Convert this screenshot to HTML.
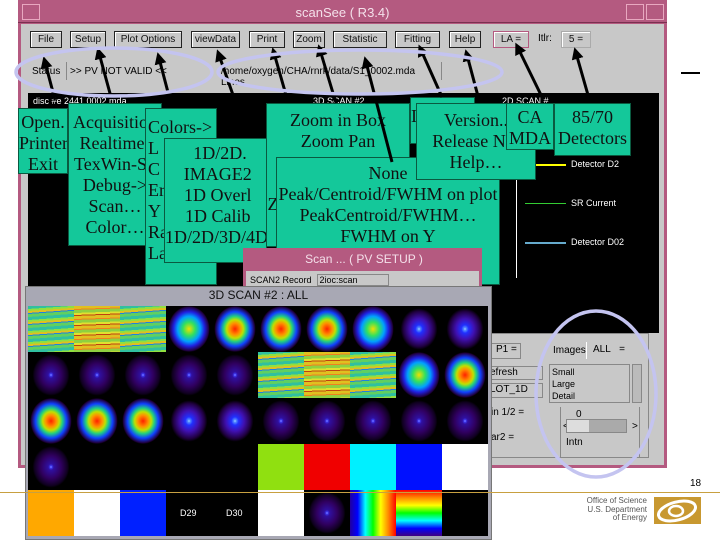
<!DOCTYPE html>
<html><head><meta charset="utf-8"><style>
*{margin:0;padding:0;box-sizing:border-box}
body{width:720px;height:540px;overflow:hidden;background:#fff;position:relative;font-family:"Liberation Sans",sans-serif}
.a{position:absolute}
.btn{position:absolute;top:31px;height:17px;border:1px solid #222;background:#c8c8c8;font-size:10px;color:#111;text-align:center;line-height:15px;box-shadow:inset 1px 1px 0 #fff}
.g{position:absolute;background:#14c89a;border:1px solid #0a5a40;font-family:"Liberation Serif",serif;font-size:18px;line-height:21px;color:#111;text-align:center;white-space:nowrap;overflow:hidden;padding-top:8px}
.w{color:#fff;font-size:9px;position:absolute}
.cell{position:absolute;width:46px;height:46px;background:#000}
.blob{background:radial-gradient(ellipse 45% 50% at 50% 50%,#ff2000 0,#ff9000 25%,#c0e000 40%,#20d080 55%,#1040ff 75%,#200040 95%,#000 100%)}
.blob2{background:radial-gradient(ellipse 45% 50% at 50% 50%,#f0e000 0,#30e060 30%,#00a0ff 55%,#2020e0 75%,#200040 95%,#000 100%)}
.blue{background:radial-gradient(ellipse 40% 45% at 50% 50%,#fff 0,#60a0ff 4%,#2030ff 20%,#4010b0 50%,#200040 85%,#000 100%)}
.pur{background:radial-gradient(ellipse 40% 45% at 50% 50%,#fff 0,#4040ff 4%,#3010a0 15%,#300060 55%,#100020 90%,#000 100%)}
.str{background:repeating-linear-gradient(176deg,#30c0a0 0 3px,#90e040 3px 5px,#e0c020 5px 7px,#2080e0 7px 8px,#60d060 8px 11px)}
.str2{background:repeating-linear-gradient(178deg,#e0c020 0 3px,#f08020 3px 4px,#90d040 4px 7px,#e0e030 7px 9px,#c04010 9px 10px)}
</style></head><body>
<div class="a" style="left:18px;top:0;width:649px;height:468px;background:#b45a80"></div>
<div class="a" style="left:21px;top:24px;width:643px;height:441px;background:#c8c8c8"></div>
<div class="a" style="left:18px;top:2px;width:649px;height:21px;background:#b45a80;border-bottom:1px solid #7a3050"></div>
<div class="a" style="left:22px;top:4px;width:18px;height:16px;border:1px solid #e8a8c0"></div>
<div class="a" style="left:626px;top:4px;width:18px;height:16px;border:1px solid #e8a8c0"></div>
<div class="a" style="left:646px;top:4px;width:18px;height:16px;border:1px solid #e8a8c0"></div>
<div class="a" style="left:0;top:5px;width:685px;text-align:center;color:#f4e0ea;font-size:13px">scanSee ( R3.4)</div>
<div class="btn" style="left:30px;width:32px">File</div>
<div class="btn" style="left:70px;width:36px">Setup</div>
<div class="btn" style="left:114px;width:68px">Plot Options</div>
<div class="btn" style="left:191px;width:49px">viewData</div>
<div class="btn" style="left:249px;width:36px">Print</div>
<div class="btn" style="left:293px;width:32px">Zoom</div>
<div class="btn" style="left:333px;width:54px">Statistic</div>
<div class="btn" style="left:395px;width:45px">Fitting</div>
<div class="btn" style="left:449px;width:32px">Help</div>
<div class="btn" style="left:493px;width:36px;border-color:#b45a80">LA =</div>
<div class="a" style="left:538px;top:33px;font-size:10px">Itlr:</div>
<div class="btn" style="left:561px;width:30px;border-color:#aaa">5 =</div>
<div class="a" style="left:32px;top:66px;font-size:10px">Status</div>
<div class="a" style="left:66px;top:62px;width:150px;height:18px;border-left:1px solid #888;font-size:10px;padding:4px 3px">&gt;&gt; PV NOT VALID &lt;&lt;</div>
<div class="a" style="left:219px;top:62px;width:223px;height:18px;border-right:1px solid #888;font-size:10px;padding:4px 2px">/home/oxygen/CHA/rnrk/data/S1_0002.mda Lines</div>
<div class="a" style="left:28px;top:93px;width:631px;height:240px;background:#000"></div>
<div class="a" style="left:28px;top:333px;width:461px;height:130px;background:#000"></div>
<div class="w" style="left:33px;top:96px">disc #e 2441 0002.mda</div>
<div class="w" style="left:313px;top:96px">3D SCAN #2</div>
<div class="w" style="left:502px;top:96px">2D SCAN #</div>
<div class="w" style="left:571px;top:159px">Detector D2</div>
<div class="w" style="left:571px;top:198px">SR Current</div>
<div class="w" style="left:571px;top:237px">Detector D02</div>
<div class="a" style="left:525px;top:164px;width:41px;height:2px;background:#ff0"></div>
<div class="a" style="left:525px;top:203px;width:41px;height:1px;background:#3c3"></div>
<div class="a" style="left:525px;top:242px;width:41px;height:2px;background:#6ac"></div>
<div class="a" style="left:516px;top:180px;width:1px;height:98px;background:#fff"></div>
<div class="a" style="left:489px;top:333px;width:160px;height:125px;border:1px solid #888"></div>
<div class="a" style="left:491px;top:343px;width:30px;height:16px;border:1px solid #888;font-size:10px;padding-left:4px">P1 =</div>
<div class="a" style="left:553px;top:345px;font-size:10px">Images</div>
<div class="a" style="left:586px;top:342px;width:52px;height:17px;border-left:1px solid #fff;font-size:10px;padding:2px 6px">ALL&nbsp;&nbsp;&nbsp;=</div>
<div class="a" style="left:489px;top:366px;width:54px;height:14px;border:1px solid #888;font-size:10px">efresh</div>
<div class="a" style="left:489px;top:383px;width:54px;height:15px;border:1px solid #888;font-size:10px">LOT_1D</div>
<div class="a" style="left:491px;top:407px;font-size:10px">in 1/2 =</div>
<div class="a" style="left:491px;top:432px;font-size:10px">ar2 =</div>
<div class="a" style="left:549px;top:364px;width:81px;height:39px;border:1px solid #888;font-size:9px;line-height:12px;padding:1px 2px">Small<br>Large<br>Detail</div>
<div class="a" style="left:632px;top:364px;width:10px;height:39px;border:1px solid #888;background:#bbb"></div>
<div class="a" style="left:560px;top:407px;width:80px;height:50px;border-left:1px solid #888;border-right:1px solid #888"></div>
<div class="a" style="left:576px;top:409px;font-size:10px">0</div>
<div class="a" style="left:563px;top:421px;font-size:10px">&lt;</div>
<div class="a" style="left:632px;top:421px;font-size:10px">&gt;</div>
<div class="a" style="left:566px;top:419px;width:61px;height:14px;border:1px solid #888;background:linear-gradient(90deg,#ddd 0 37%,#aaa 37%)"></div>
<div class="a" style="left:566px;top:437px;font-size:10px">Intn</div>
<div class="g" style="left:68px;top:103px;width:94px;height:143px">Acquisition<br>Realtime-<br>TexWin-Sy<br>Debug-&gt;<br>Scan…<br>Color…</div>
<div class="g" style="left:18px;top:108px;width:50px;height:66px;padding-top:3px">Open.<br>Printer<br>Exit</div>
<div class="g" style="left:145px;top:108px;width:72px;height:177px;text-align:left;padding-left:2px">Colors-&gt;<br>L<br>C<br>Er<br>Y<br>Ra<br>Labels…</div>
<div class="g" style="left:164px;top:138px;width:103px;height:125px;padding-top:4px">&nbsp;&nbsp;1D/2D.<br>&nbsp;IMAGE2<br>&nbsp;1D Overl<br>&nbsp;1D Calib<br>1D/2D/3D/4D</div>
<div class="g" style="left:266px;top:103px;width:144px;height:144px;padding-top:6px">Zoom in Box<br>Zoom Pan<br><br><br><span style="margin-left:-130px">Z</span></div>
<div class="g" style="left:410px;top:97px;width:65px;height:47px;text-align:left">I</div>
<div class="g" style="left:276px;top:157px;width:224px;height:128px;padding-top:5px">None<br>Peak/Centroid/FWHM on plot<br>PeakCentroid/FWHM…<br>FWHM on Y</div>
<div class="g" style="left:416px;top:103px;width:120px;height:77px;padding-top:6px">Version..<br>Release Not<br>Help…</div>
<div class="g" style="left:506px;top:103px;width:48px;height:47px;padding-top:3px">CA<br>MDA</div>
<div class="g" style="left:554px;top:103px;width:77px;height:53px;padding-top:3px">85/70<br>Detectors</div>
<div class="a" style="left:243px;top:248px;width:239px;height:45px;background:#b45a80"></div>
<div class="a" style="left:246px;top:271px;width:233px;height:22px;background:#c8c8c8;font-size:9px;padding:4px">SCAN2 Record&nbsp;&nbsp;<span style="border:1px solid #888;padding:0 30px 0 2px">2ioc:scan</span></div>
<div class="a" style="left:246px;top:252px;width:236px;text-align:center;color:#f4e0ea;font-size:12px">Scan ... ( PV SETUP )</div>
<div class="a" style="left:25px;top:286px;width:467px;height:254px;background:#a8a8b4;border:1px solid #777"></div>
<div class="a" style="left:25px;top:288px;width:467px;text-align:center;font-size:12px;color:#111">3D SCAN #2 : ALL</div>
<div class="a" style="left:28px;top:306px;width:460px;height:230px;background:#000"></div>
<div id="grid"></div>
<div class="a" style="left:0;top:492px;width:720px;height:1px;background:#c8a040"></div>
<div class="a" style="left:690px;top:478px;font-size:10px">18</div>
<div class="a" style="left:540px;top:497px;width:107px;text-align:right;font-size:8px;line-height:8.5px;color:#555">Office of Science<br>U.S. Department<br>of Energy</div>
<svg class="a" style="left:654px;top:497px" width="47" height="27"><rect width="47" height="27" fill="#c89830"/><ellipse cx="23" cy="14" rx="19" ry="9" fill="none" stroke="#fff" stroke-width="3" transform="rotate(-15 23 14)"/><ellipse cx="22" cy="14" rx="7" ry="5" fill="none" stroke="#fff" stroke-width="2.5"/></svg>
<div class="a" style="left:681px;top:72px;width:19px;height:2px;background:#000"></div>
<svg class="a" style="left:0;top:0" width="720" height="540">
<defs><marker id="m" markerWidth="4" markerHeight="4" refX="2" refY="2" orient="auto"><path d="M0,0 L4,2 L0,4z" fill="#000"/></marker></defs>
<g stroke="#000" stroke-width="3" marker-end="url(#m)">
<line x1="55" y1="100" x2="45" y2="62"/><line x1="111" y1="97" x2="99" y2="53"/><line x1="170" y1="100" x2="159" y2="58"/>
<line x1="233" y1="95" x2="219" y2="55"/><line x1="286" y1="95" x2="274" y2="53"/><line x1="336" y1="103" x2="320" y2="50"/>
<line x1="392" y1="162" x2="366" y2="62"/><line x1="442" y1="97" x2="421" y2="50"/><line x1="479" y1="100" x2="467" y2="55"/>
<line x1="541" y1="95" x2="518" y2="48"/><line x1="588" y1="95" x2="576" y2="53"/></g>
<g fill="none" stroke="#c4c4f0" stroke-width="3.5">
<ellipse cx="114" cy="72" rx="98" ry="24"/><ellipse cx="360" cy="72" rx="142" ry="22"/><ellipse cx="596" cy="394" rx="60" ry="83"/></g>
</svg>
<script>
var rows=[["str","str2","str","blob2","blob","blob","blob","blob2","blue","blue"],
["pur","pur","pur","pur","pur","str","str2","str","blob2","blob"],
["blob","blob","blob","blue","blue","pur","pur","pur","pur","pur"],
["pur","","","","","#90e010","#f00000","#00f0ff","#0010ff","#fff"],
["#ffa800","#fff","#0020ff","D29","D30","#fff","pur","rv","rh",""]];
var h="";
for(var r=0;r<5;r++)for(var c=0;c<10;c++){var v=rows[r][c],st="left:"+(28+c*46)+"px;top:"+(306+r*46)+"px;",cl="cell",t="";
if(v.charAt(0)=="#")st+="background:"+v;else if(v=="D29"||v=="D30"){t='<span style="color:#fff;font-size:9px;position:absolute;top:18px;left:14px">'+v+'</span>'}
else if(v=="rv")st+="background:linear-gradient(90deg,#2000a0,#00f,#0ff,#0f0,#ff0,#f80,#f00)";
else if(v=="rh")st+="background:linear-gradient(180deg,#f00,#f80,#ff0,#0f0,#0ff,#00f,#400080)";
else if(v)cl+=" "+v;
h+='<div class="'+cl+'" style="'+st+'">'+t+'</div>';}
document.getElementById("grid").innerHTML=h;
</script>
</body></html>
